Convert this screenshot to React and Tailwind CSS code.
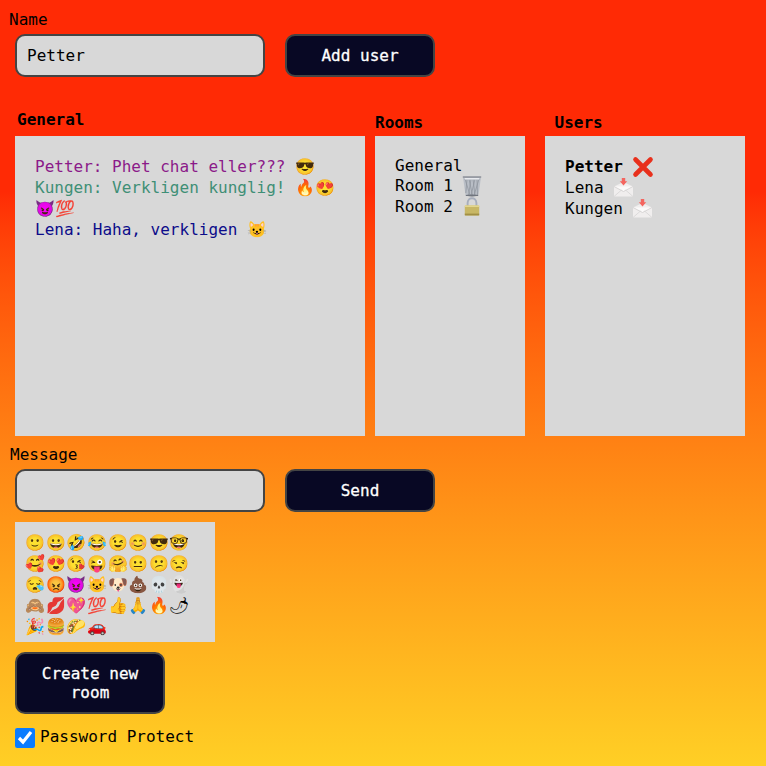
const font = "font-['DejaVu_Sans_Mono','Liberation_Mono',monospace]";

const emojis = '🙂😀🤣😂😉😊😎🤓🥰😍😘😜🤗😐😕😒😪😡😈😺🐶💩💀👻🙈💋💖💯👍🙏🔥🌶🎉🍔🌮🚗'.match(/./gu);

const Button = ({ children, className = '' }) => (
  <button className={`w-[150px] bg-[#080824] text-white [-webkit-text-stroke:0.3px_white] border-2 border-[#444] rounded-[10px] px-3 ${className}`}>
    {children}
  </button>
);

const Cross = () => (
  <svg viewBox="0 0 22 22" className="w-[22px] h-[22px] ml-[9.6px] shrink-0">
    <path d="M3.5 3.5 L18.5 18.5 M18.5 3.5 L3.5 18.5" stroke="#e8301c" strokeWidth="4.6" strokeLinecap="round" />
  </svg>
);

const Mail = () => (
  <svg viewBox="0 0 21 21" className="w-[21px] h-[21px] ml-[9.6px] shrink-0">
    <path d="M1 9.5 L10.5 5 L20 9.5 V19.5 H1 Z" fill="#f0eeee" />
    <path d="M1 9.5 L10.5 14.5 L20 9.5" fill="#fbfafa" stroke="#cfcdcd" strokeWidth="0.8" />
    <path d="M1 19.5 L8.5 13 M20 19.5 L12.5 13" stroke="#d6d4d4" strokeWidth="0.8" fill="none" />
    <path d="M8.8 1 H12.2 V4.2 H14.2 L10.5 8.4 L6.8 4.2 H8.8 Z" fill="#f4655f" />
  </svg>
);

const Trash = () => (
  <svg viewBox="0 0 20 22" className="w-5 h-[22px] ml-[9.6px] shrink-0">
    <path d="M1 2.2 H19 L16.4 20.5 Q10 22 3.6 20.5 Z" fill="#b9bec6" />
    <path d="M3 4 L8 20 M7 4 L10.5 20.5 M11 4 L13 20.5 M15 4 L15.5 20 M5 4 L3.8 18 M9 4 L6.5 20.5 M13 4 L9 20.5 M17 4 L12 20.5" stroke="#8d929b" strokeWidth="0.7" />
    <path d="M3 4.6 H17 L17.4 3 H2.6 Z" fill="#e8eaee" />
    <path d="M0.8 2 H19.2" stroke="#7c818a" strokeWidth="1.2" />
    <ellipse cx="10" cy="20.4" rx="6.4" ry="1" fill="#70757e" />
  </svg>
);

const Lock = () => (
  <svg viewBox="0 0 16 19" className="w-4 h-[19px] ml-[11.6px] shrink-0">
    <path d="M3.6 9 V6 C3.6 -0.4 12.4 -0.4 12.4 6 V9" fill="none" stroke="#a7aebc" strokeWidth="1.9" />
    <rect x="0.8" y="8.4" width="14.4" height="10" rx="1" fill="#c8b765" />
    <rect x="0.8" y="8.4" width="14.4" height="1.6" fill="#e3d68e" />
    <rect x="0.8" y="16.6" width="14.4" height="1.8" fill="#a18f45" />
  </svg>
);

export default function App() {
  return (
    <div className={`${font} h-[766px] overflow-hidden bg-gradient-to-b from-[#ff2a05] from-[25%] to-[#ffcf25] text-[16px] leading-[21px] text-black`}>
      <div className="pl-[9px] pt-[9px]">Name</div>
      <div className="flex gap-5 pl-[15px] pt-[4px]">
        <input readOnly value="Petter" className="w-[250px] h-[43px] bg-[#d8d8d8] border-2 border-[#444] rounded-[10px] px-[10px] outline-none" />
        <Button className="h-[43px]">Add user</Button>
      </div>

      <div className="flex pl-[15px] pt-[32px]">
        <div className="w-[350px] mr-[10px]">
          <h2 className="font-bold pl-[2px] h-[27px]">General</h2>
          <div className="h-[300px] bg-[#d8d8d8] px-5 py-5">
            <p className="text-[#8b1a89]">Petter: Phet chat eller??? 😎</p>
            <p className="text-[#3f8f76]">Kungen: Verkligen kunglig! 🔥😍😈💯</p>
            <p className="text-[#0c0c8a]">Lena: Haha, verkligen 😺</p>
          </div>
        </div>
        <div className="w-[150px] mr-5">
          <h2 className="font-bold pt-[3px] h-[27px]">Rooms</h2>
          <div className="h-[300px] bg-[#d8d8d8] px-5 pt-[19px]">
            <p className="flex items-center h-[20.5px]">General</p>
            <p className="flex items-center h-[20.5px]">Room 1<Trash /></p>
            <p className="flex items-center h-[20.5px]">Room 2<Lock /></p>
          </div>
        </div>
        <div className="w-[200px]">
          <h2 className="font-bold pl-[9.5px] pt-[3px] h-[27px]">Users</h2>
          <div className="h-[300px] bg-[#d8d8d8] px-5 py-5">
            <p className="flex items-center h-[21px] font-bold">Petter<Cross /></p>
            <p className="flex items-center h-[21px]">Lena<Mail /></p>
            <p className="flex items-center h-[21px]">Kungen<Mail /></p>
          </div>
        </div>
      </div>

      <div className="pl-[10px] pt-[8px]">Message</div>
      <div className="flex gap-5 pl-[15px] pt-[4px]">
        <input readOnly className="w-[250px] h-[43px] bg-[#d8d8d8] border-2 border-[#444] rounded-[10px] px-[10px] outline-none" />
        <Button className="h-[43px]">Send</Button>
      </div>

      <div className="ml-[15px] mt-[10px] w-[200px] h-[120px] bg-[#d8d8d8] p-[10px]">
        {emojis.map((e, i) => <span key={i} className="inline-block w-[20.6px] text-center">{e}</span>)}
      </div>

      <Button className="ml-[15px] mt-[10px] h-[62px] block leading-[19.5px]">Create new room</Button>

      <label className="flex items-start gap-[5px] pl-[15px] pt-[14px]">
        <input type="checkbox" readOnly checked className="w-5 h-5 accent-[#0a7cff]" />
        <span className="-mt-[2px]">Password Protect</span>
      </label>
    </div>
  );
}
